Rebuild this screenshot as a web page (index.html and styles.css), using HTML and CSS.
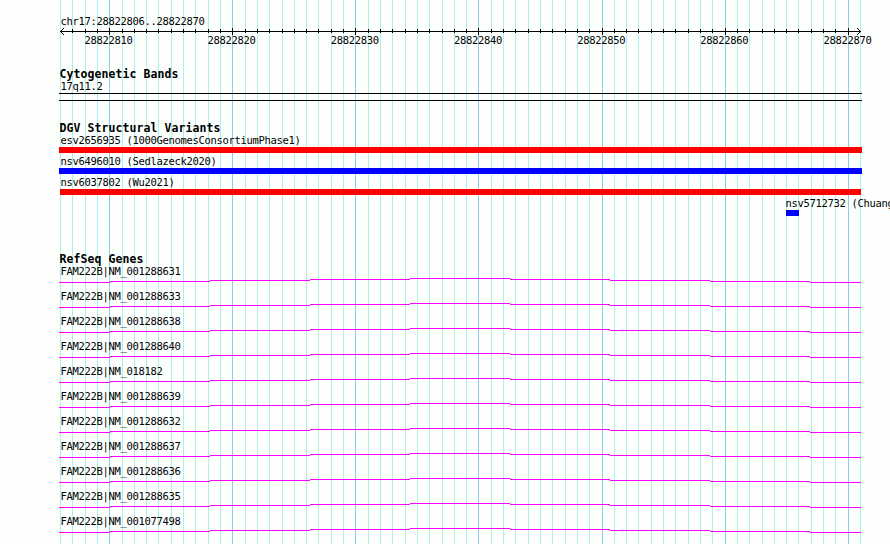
FILE: index.html
```
<!DOCTYPE html>
<html lang="en">
<head>
    <meta charset="UTF-8">
    <title>chr17:28822806..28822870</title>
    <link rel="stylesheet" href="styles.css">
</head>
<body>
    <div class="browser">
        <svg class="grid" width="890" height="544" aria-hidden="true"></svg>

        <div class="ruler">
            <div class="label">chr17:28822806..28822870</div>
            <svg class="axis" width="890" height="8" viewBox="0 0 890 8" shape-rendering="crispEdges"></svg>
            <div class="numbers">
                <span>28822810</span>
                <span>28822820</span>
                <span>28822830</span>
                <span>28822840</span>
                <span>28822850</span>
                <span>28822860</span>
                <span>28822870</span>
            </div>
        </div>

        <div class="track cytobands">
            <h2>Cytogenetic Bands</h2>
            <div class="label">17q11.2</div>
            <div class="band"></div>
        </div>

        <div class="track variants">
            <h2>DGV Structural Variants</h2>
            <div class="variant">
                <div class="label">esv2656935 (1000GenomesConsortiumPhase1)</div>
                <div class="bar loss"></div>
            </div>
            <div class="variant">
                <div class="label">nsv6496010 (Sedlazeck2020)</div>
                <div class="bar gain"></div>
            </div>
            <div class="variant">
                <div class="label">nsv6037802 (Wu2021)</div>
                <div class="bar loss inner"></div>
            </div>
            <div class="variant right">
                <div class="label">nsv5712732 (Chuang2021)</div>
                <div class="bar gain small"></div>
            </div>
        </div>

        <div class="track genes">
            <h2>RefSeq Genes</h2>
            <div id="geneList"></div>
        </div>
    </div>

    <script src="script.js"></script>
</body>
</html>
```
FILE: styles.css
```
* {
    margin: 0;
    padding: 0;
    box-sizing: border-box;
}

body {
    background: #fdfffc;
    color: #000;
    font-family: "DejaVu Sans Mono", monospace;
    font-size: 10.5px;
    letter-spacing: -0.321px;
    line-height: 12px;
    overflow: hidden;
}

.browser {
    position: relative;
    width: 890px;
    height: 544px;
    padding-top: 16px;
    overflow: hidden;
}

/* vertical lines run behind every track */
.grid {
    position: absolute;
    top: 0;
    left: 0;
    z-index: -1;
}

svg {
    display: block;
}

.label {
    height: 12px;
    padding-left: 60.4px;
    line-height: 10px;
    white-space: nowrap;
}

h2 {
    height: 12px;
    padding-left: 59.4px;
    font-size: 11.5px;
    font-weight: bold;
    letter-spacing: 0.077px;
    line-height: 12px;
}

.ruler {
    height: 52px;
}

.numbers {
    display: flex;
    padding-left: 84.4px;
    margin-top: -1px;
    line-height: 10px;
}

.numbers span {
    flex: 0 0 123.2px;
}

.cytobands {
    height: 54px;
}

.cytobands .label {
    line-height: 12px;
}

.band {
    width: 803px;
    height: 8px;
    margin: 1px 0 0 59px;
    border-top: 1px solid #000;
    border-bottom: 1px solid #000;
}

.variants {
    height: 131px;
}

.variants h2 {
    height: 13px;
}

.variant {
    height: 21px;
}

.bar {
    width: 803px;
    height: 6px;
    margin-left: 59px;
}

.loss {
    background: #ff0000;
}

.gain {
    background: #0000ff;
}

.inner {
    width: 801px;
    margin-left: 60px;
}

.right .label {
    padding-left: 785.4px;
}

.small {
    width: 13px;
    margin-left: 786px;
}

.genes h2 {
    height: 13px;
}

.gene {
    height: 25px;
}
```
FILE: script.js
```
const left = 60;
const bases = 65;
const perBase = 800 / bases;

// Grid lines and ruler ticks, one per base
let lines = '';
let ticks = '<path d="M60 3h801v1H60z"/>';

for (let i = 0; i <= bases; i++) {
    const x = Math.round(left + i * perBase);
    const major = i % 10 === 4;
    lines += `<rect x="${x}" y="0" width="1" height="544" fill="${major ? '#87ceeb' : '#afeeee'}"/>`;
    if (i > 0 && i < bases) {
        ticks += major
            ? `<rect x="${x}" y="0" width="1" height="7"/>`
            : `<rect x="${x}" y="1" width="1" height="4"/>`;
    }
}

// arrow heads
for (let i = 1; i <= 3; i++) {
    for (const y of [3 - i, 3 + i]) {
        ticks += `<rect x="${60 + i}" y="${y}" width="1" height="1"/>`;
        ticks += `<rect x="${860 - i}" y="${y}" width="1" height="1"/>`;
    }
}

document.querySelector('.grid').innerHTML = lines;
document.querySelector('.axis').innerHTML = ticks;

// Genes
const genes = [
    'NM_001288631',
    'NM_001288633',
    'NM_001288638',
    'NM_001288640',
    'NM_018182',
    'NM_001288639',
    'NM_001288632',
    'NM_001288637',
    'NM_001288636',
    'NM_001288635',
    'NM_001077498'
];

const intron = 'M59 4.5H110M110 3.5H210M210 2.5H310M310 1.5H410M410 .5H510M510 1.5H610M610 2.5H710M710 3.5H810M810 4.5H861';

document.getElementById('geneList').innerHTML = genes.map(name => `
    <div class="gene">
        <div class="label">FAM222B|${name}</div>
        <svg width="890" height="5"><path d="${intron}" stroke="#ff00ff"/></svg>
    </div>
`).join('');
```
